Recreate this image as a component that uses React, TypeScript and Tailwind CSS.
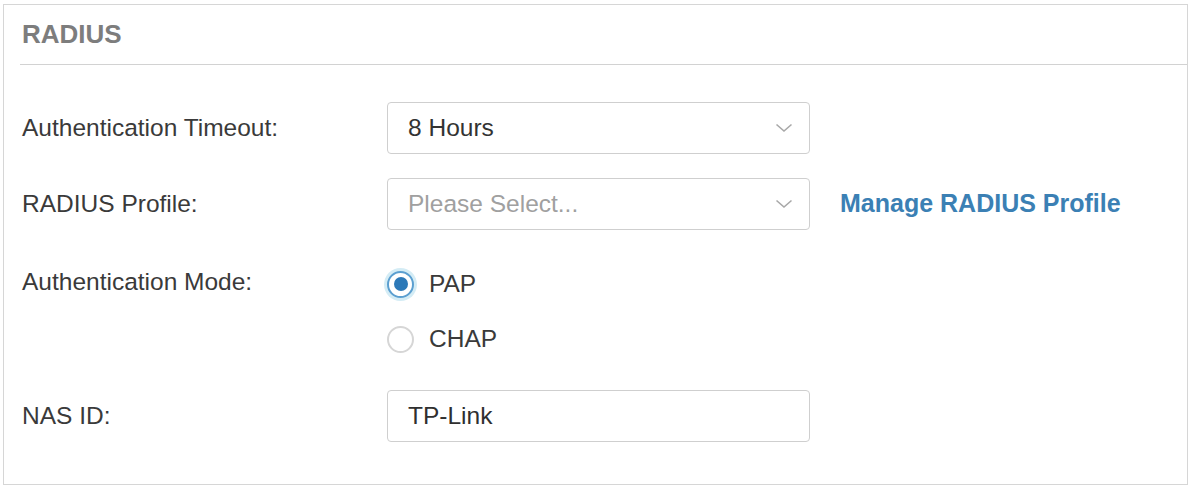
import { useState } from "react";

const labelClass = "w-[365px] shrink-0 text-[24.5px] text-[#3a3a3a]";
const boxClass =
  "w-[423px] h-[52px] rounded-[4px] border border-[#cfcfcf] bg-white flex items-center pl-[20px] pr-[16px] text-[24.5px]";

function Chevron() {
  return (
    <svg width="18" height="10" viewBox="0 0 18 10" className="ml-auto">
      <path d="M1.5 1.5 L9 8 L16.5 1.5" fill="none" stroke="#a8a8a8" strokeWidth="1.6" />
    </svg>
  );
}

function Select({ value, placeholder }: { value?: string; placeholder?: string }) {
  return (
    <div className={boxClass}>
      <span className={value ? "text-[#333]" : "text-[#a0a0a0]"}>
        {value ?? placeholder}
      </span>
      <Chevron />
    </div>
  );
}

function Radio({
  label,
  checked,
  onClick,
}: {
  label: string;
  checked: boolean;
  onClick: () => void;
}) {
  return (
    <button type="button" onClick={onClick} className="flex items-center h-[40px] cursor-pointer">
      <span
        className={
          checked
            ? "w-[27px] h-[27px] rounded-full border-2 border-[#5b9fd0] bg-white flex items-center justify-center ring-[3px] ring-[#d4ecf5]"
            : "w-[27px] h-[27px] rounded-full border-2 border-[#d6d6d6] bg-white"
        }
      >
        {checked && <span className="w-[14px] h-[14px] rounded-full bg-[#2c79b8]" />}
      </span>
      <span className="ml-[15px] text-[24.5px] text-[#3a3a3a]">{label}</span>
    </button>
  );
}

export default function App() {
  const [mode, setMode] = useState<"PAP" | "CHAP">("PAP");
  const [nasId, setNasId] = useState("TP-Link");

  return (
    <div
      className="w-[1193px] h-[487px] bg-white pt-[4px] pl-[3px]"
      style={{ fontFamily: '"Liberation Sans", Arial, sans-serif' }}
    >
      <div className="w-[1185px] h-[481px] border border-[#d6d6d6] bg-white">
        <div className="h-[59px] flex items-center pl-[18px] text-[26px] font-bold text-[#7d7d7d]">
          RADIUS
        </div>
        <div className="ml-[16px] border-t border-[#d2d2d2]" />

        <div className="pl-[18px] pt-[37px] flex flex-col">
          <div className="flex items-center">
            <span className={labelClass}>Authentication Timeout:</span>
            <Select value="8 Hours" />
          </div>

          <div className="flex items-center mt-[24px]">
            <span className={labelClass}>RADIUS Profile:</span>
            <Select placeholder="Please Select..." />
            <a href="#" className="ml-[30px] text-[25px] font-bold text-[#3b80b4]">
              Manage RADIUS Profile
            </a>
          </div>

          <div className="flex mt-[34px]">
            <span className={`${labelClass} leading-[40px] -mt-[2px]`}>Authentication Mode:</span>
            <div className="flex flex-col gap-[15px]">
              <Radio label="PAP" checked={mode === "PAP"} onClick={() => setMode("PAP")} />
              <Radio label="CHAP" checked={mode === "CHAP"} onClick={() => setMode("CHAP")} />
            </div>
          </div>

          <div className="flex items-center mt-[31px]">
            <span className={labelClass}>NAS ID:</span>
            <input
              value={nasId}
              onChange={(e) => setNasId(e.target.value)}
              className={`${boxClass} text-[#2f2f2f] outline-none`}
            />
          </div>
        </div>
      </div>
    </div>
  );
}
